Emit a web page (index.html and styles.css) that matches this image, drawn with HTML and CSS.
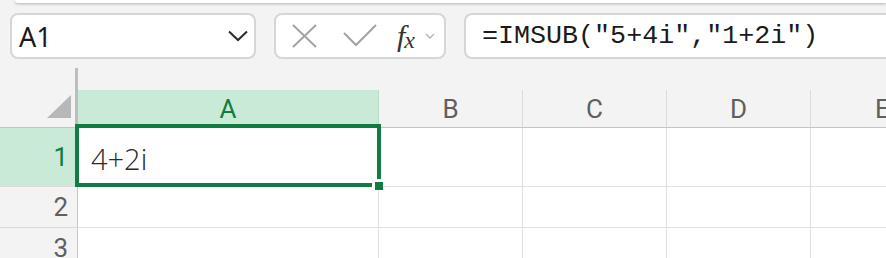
FILE: index.html
```html
<!DOCTYPE html>
<html>
<head>
<meta charset="utf-8">
<link rel="stylesheet" href="styles.css">
</head>
<body>
<div class="ribbon"></div>
<div class="toolbar">
  <div class="box namebox">
    <span class="name">A1</span>
    <svg class="chev" width="20" height="12" viewBox="0 0 20 12"><polyline points="1,1.5 10,10 19,1.5" fill="none" stroke="#2b2b2b" stroke-width="2"/></svg>
  </div>
  <div class="box fxbox">
    <svg class="ic" width="28" height="26" viewBox="0 0 28 26"><path d="M3 2 L26 24 M26 2 L3 24" stroke="#a3a3a3" stroke-width="2" fill="none"/></svg>
    <svg class="ic chk" width="34" height="24" viewBox="0 0 34 24"><polyline points="1,9 13,21 33,1" stroke="#a3a3a3" stroke-width="2" fill="none"/></svg>
    <span class="fx"><span class="f">f</span><span class="x">x</span></span>
    <svg class="mini" width="10" height="6" viewBox="0 0 10 6"><polyline points="1,1 5,5 9,1" stroke="#b3b3b3" stroke-width="1.3" fill="none"/></svg>
  </div>
  <div class="box formula">=IMSUB("5+4i","1+2i")</div>
</div>
<div class="sheet">
  <div class="row head">
    <div class="corner"><svg width="26" height="25" viewBox="0 0 26 25"><polygon points="25,1 25,24 1,24" fill="#b8b8b8"/></svg></div>
    <div class="ch sel">A</div>
    <div class="ch">B</div>
    <div class="ch">C</div>
    <div class="ch">D</div>
    <div class="ch">E</div>
  </div>
  <div class="row r1">
    <div class="rh sel">1</div>
    <div class="cell val">4+2i</div>
    <div class="cell"></div><div class="cell"></div><div class="cell"></div><div class="cell"></div>
  </div>
  <div class="row r2">
    <div class="rh">2</div>
    <div class="cell"></div><div class="cell"></div><div class="cell"></div><div class="cell"></div><div class="cell"></div>
  </div>
  <div class="row r3">
    <div class="rh">3</div>
    <div class="cell"></div><div class="cell"></div><div class="cell"></div><div class="cell"></div><div class="cell"></div>
  </div>
  <div class="selection"></div>
  <div class="handle"></div>
</div>
</body>
</html>
```
FILE: styles.css
```css
html, body {
  margin: 0;
  padding: 0;
  background: #f3f3f3;
  overflow: hidden;
  width: 886px;
  height: 258px;
  font-family: "Noto Sans", "Liberation Sans", sans-serif;
}
.ribbon {
  margin-left: 15px;
  height: 3px;
  background: #fff;
  border-bottom-left-radius: 8px;
  box-shadow: 0 1px 3px rgba(0,0,0,0.28);
}
.toolbar {
  display: flex;
  gap: 18px;
  padding: 10px 0 0 10px;
  height: 46px;
  margin-right: -30px;
}
.box {
  box-sizing: border-box;
  height: 46px;
  background: #fff;
  border: 2px solid #d6d6d6;
  border-radius: 8px;
  display: flex;
  align-items: center;
}
.namebox {
  width: 246px;
  padding: 0 6px 0 7px;
  justify-content: space-between;
}
.name {
  font-size: 27px;
  color: #1b1b1b;
  line-height: 1;
}
.fxbox {
  width: 172px;
  padding-left: 14px;
}
.ic { display: block; }
.chk { margin-left: 25px; }
.fx {
  margin-left: 20px;
  font-family: "Liberation Serif", serif;
  font-style: italic;
  color: #333;
  display: flex;
  align-items: baseline;
}
.fx .f { font-size: 30px; }
.fx .x { font-size: 24px; margin-left: -1px; position: relative; top: 2px; }
.mini { margin-left: 10px; }
.formula {
  flex: 1;
  padding-left: 16px;
  font-family: "Liberation Mono", monospace;
  font-size: 26.7px;
  color: #1b1b1b;
  border-right: none;
  border-radius: 8px 0 0 8px;
}
.sheet {
  position: relative;
  margin-top: 9px;
  overflow: hidden;
}
.row {
  display: grid;
  grid-template-columns: 78px 301px 144px 144px 144px 144px;
}
.head {
  height: 60px;
}
.corner {
  box-sizing: border-box;
  border-right: 3px solid #bdbdbd;
  width: 78px;
  display: flex;
  align-items: flex-end;
  justify-content: flex-end;
  padding: 0 3px 8px 0;
  border-bottom: 1px solid #c4c4c4;
}
.corner svg { display: block; }
.ch {
  box-sizing: border-box;
  margin-top: 22px;
  border-right: 1px solid #dadada;
  border-bottom: 1px solid #c4c4c4;
  color: #5f5f5f;
  font-family: Roboto, "Noto Sans", sans-serif;
  font-size: 26px;
  display: flex;
  align-items: center;
  justify-content: center;
  line-height: 1;
}
.ch.sel {
  background: #c9ead7;
  color: #107c41;
  border-right-color: #b5dcc5;
}
.rh {
  box-sizing: border-box;
  border-right: 1px solid #c8c8c8;
  border-bottom: 1px solid #dadada;
  color: #5f5f5f;
  font-family: Roboto, "Noto Sans", sans-serif;
  font-size: 26px;
  display: flex;
  align-items: center;
  justify-content: flex-end;
  padding-right: 9px;
  line-height: 1;
}
.rh.sel {
  background: #c9ead7;
  color: #107c41;
}
.cell {
  box-sizing: border-box;
  background: #fff;
  border-right: 1px solid #e0e0e0;
  border-bottom: 1px solid #e0e0e0;
}
.r1 { height: 59px; }
.r2 { height: 41px; }
.r3 { height: 41px; }
.val {
  font-family: "Open Sans", "Noto Sans", sans-serif;
  font-weight: 300;
  font-size: 29px;
  color: #2a2a2a;
  display: flex;
  align-items: center;
  padding-left: 13px;
  padding-top: 2px;
}
.selection {
  position: absolute;
  left: 75px;
  top: 56px;
  width: 306px;
  height: 63px;
  box-sizing: border-box;
  border: 4px solid #107c41;
}
.handle {
  position: absolute;
  left: 372px;
  top: 111px;
  width: 8px;
  height: 8px;
  background: #107c41;
  border: 3px solid #fff;
  border-right-width: 0;
  border-bottom-width: 0;
}
```
